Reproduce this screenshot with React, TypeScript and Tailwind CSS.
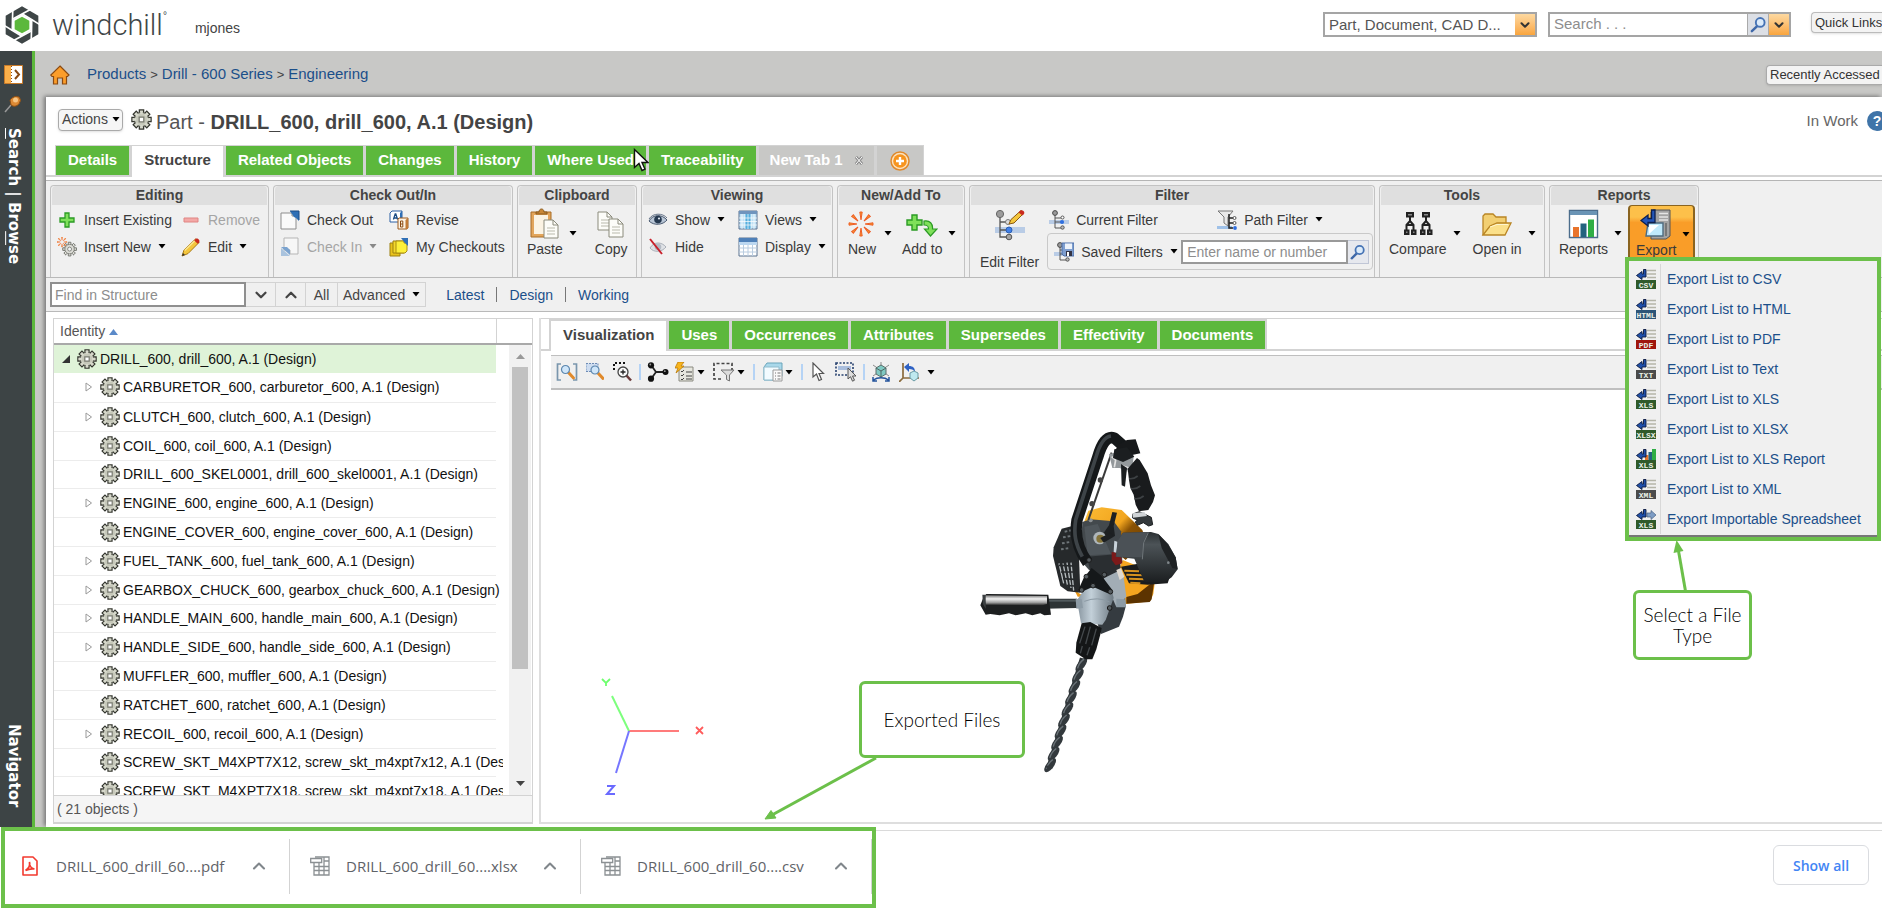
import { useState } from 'react';
import type { ReactNode } from 'react';
import { ChevronDown, ChevronUp } from 'lucide-react';

type IconProps = { className?: string };

/* ---------- small shared glyphs ---------- */

function Caret({ className = 'text-black' }: IconProps) {
  return (
    <svg className={`h-[5px] w-2 shrink-0 ${className}`} viewBox="0 0 8 5">
      <path d="M0.5 0h7L4 4.6z" fill="currentColor" />
    </svg>
  );
}

function Gear({ className = 'h-5 w-5' }: IconProps) {
  const teeth = [0, 45, 90, 135, 180, 225, 270, 315];
  return (
    <svg className={`shrink-0 ${className}`} viewBox="0 0 20 20">
      {teeth.map((a) => (
        <path key={a} d="M8 4.2V0.900h4v3.300" fill="#d9dbcf" stroke="#34362f" strokeWidth="1.300" transform={`rotate(${a} 10 10)`} />
      ))}
      <circle cx="10" cy="10" r="6.800" fill="#c6c8ba" stroke="#4a4c43" strokeWidth="0.900" />
      {teeth.map((a) => (
        <path key={a} d="M8.700 5V1.600h2.600V5z" fill="#d6d8cb" transform={`rotate(${a} 10 10)`} />
      ))}
      <path d="M7.800 7.800h4.400v4.400H7.800z" fill="#fff" stroke="#77796f" strokeWidth="1.200" />
    </svg>
  );
}

function Magnifier({ className = 'h-5 w-5' }: IconProps) {
  return (
    <svg className={className} viewBox="0 0 20 20">
      <path d="M8.600 11.600L3 17" stroke="#3f68a8" strokeWidth="2.600" strokeLinecap="round" />
      <circle cx="11.800" cy="7.800" r="4.600" fill="#dcebfa" stroke="#4673b5" strokeWidth="2" />
    </svg>
  );
}

function Logo() {
  return (
    <svg className="h-[38px] w-[34px] shrink-0" viewBox="17 17 102 114">
      <path d="M68 18l49 28v56l-49 28-49-28V46z" fill="#3e4647" />
      {[0, 60, 120, 180, 240, 300].map((a) => (
        <path key={a} d="M39 57L68 41l28-15" fill="none" stroke="#fff" strokeWidth="5" transform={`rotate(${a} 68 74)`} />
      ))}
      <path d="M68 42l28 16v32l-28 16-28-16V58z" fill="#fff" />
      <path d="M68 49l22 12v26l-22 12-22-12V61z" fill="#5cb83c" />
    </svg>
  );
}

/* ---------- ribbon icons ---------- */

const PlusIcon = () => (
  <svg className="h-5 w-5" viewBox="0 0 20 20">
    <path d="M8 3h4v5h5v4h-5v5H8v-5H3V8h5z" fill="#7fe05a" stroke="#2b9a24" strokeWidth="1.300" />
  </svg>
);

const MinusIcon = () => (
  <svg className="h-5 w-5" viewBox="0 0 20 20">
    <path d="M3 8h14v4H3z" fill="#f3a8a6" stroke="#e08583" />
  </svg>
);

function Burst({ x, y, r }: { x: number; y: number; r: number }) {
  return (
    <g transform={`translate(${x} ${y})`}>
      {[0, 45, 90, 135, 180, 225, 270, 315].map((a) => (
        <path key={a} d={`M0 ${-r * 0.35}L${r * 0.1} ${-r}h${-r * 0.2}z`} fill="#f59a2c" stroke="#ee5a24" strokeWidth={r * 0.08} transform={`rotate(${a})`} />
      ))}
    </g>
  );
}

const InsertNewIcon = () => (
  <svg className="h-5 w-5" viewBox="0 0 20 20">
    <g transform="translate(5 4.5) scale(0.76)">
      {[0, 45, 90, 135, 180, 225, 270, 315].map((a) => (
        <path key={a} d="M8.300 4.200V1h3.400v3.200" fill="#e2e2dc" stroke="#6d6f68" strokeWidth="1.200" transform={`rotate(${a} 10 10)`} />
      ))}
      <circle cx="10" cy="10" r="6.200" fill="#dcdcd6" stroke="#6d6f68" />
      <circle cx="10" cy="10" r="2.600" fill="#f4f4f4" stroke="#6d6f68" />
    </g>
    <Burst x={5} y={5} r={5} />
  </svg>
);

const PencilIcon = () => (
  <svg className="h-5 w-5" viewBox="0 0 20 20">
    <path d="M1 19l2-6L14.500 2l3.600 3.400L7 16.600z" fill="#f4c63d" stroke="#a97812" />
    <path d="M3.600 13.600L14.600 3" stroke="#fbe896" strokeWidth="1.400" />
    <path d="M14.500 2C16 .4 19.600 3 18.100 5.400l-1.400 1.400-3.500-3.400z" fill="#c92a1e" />
    <path d="M1 19l1-3 2 2z" fill="#333" />
  </svg>
);

const CheckOutIcon = () => (
  <svg className="h-5 w-5" viewBox="0 0 20 20">
    <path d="M1 3h11v3h4v13H1z" fill="#fafafa" stroke="#8d8d8d" />
    <path d="M10 1h9v10l-3-3-2-1-2-3z" fill="#2f6fb5" />
    <path d="M10 1h9v9" fill="none" stroke="#1d4d85" />
  </svg>
);

const CheckInIcon = () => (
  <svg className="h-5 w-5" viewBox="0 0 20 20">
    <path d="M4 1h14v16h-8v-4H4z" fill="#f7f7f7" stroke="#b5b5b5" />
    <path d="M1 10l9 8v-5l-3-3z" fill="#7ba3cf" />
    <path d="M1 11v8h9z" fill="#a9c3de" />
  </svg>
);

const ReviseIcon = () => (
  <svg className="h-5 w-5" viewBox="0 0 20 20">
    <path d="M3 1h10v11H1V3z" fill="#fff" stroke="#2b5fa3" />
    <path d="M11 3l2-2v11h-2z" fill="#2f6fb5" />
    <path d="M4.400 9.500L6.200 4h.6l1.800 5.500M5 8h3" stroke="#1d4d85" strokeWidth="1.300" fill="none" />
    <path d="M10 8h9v10l-1 1H9V9z" fill="#fdf3e4" stroke="#9c5a1e" />
    <path d="M16.500 10l2.500-2v11h-2.500z" fill="#c27a35" />
    <path d="M11.500 11v6h2.300v-6zM11.500 14h2.300" stroke="#8a4a12" fill="none" />
  </svg>
);

const MyCheckoutsIcon = () => (
  <svg className="h-5 w-5" viewBox="0 0 20 20">
    <path d="M1 6h10v13H1z" fill="#e8c21c" stroke="#9d8010" />
    <path d="M4 4h11v12H4z" fill="#f4d92c" stroke="#9d8010" />
    <path d="M7 4h8v2h3v8l-2 2H7z" fill="#fdf03a" stroke="#a98c10" />
    <path d="M12 1h7v8l-3-3z" fill="#2f6fb5" />
  </svg>
);

const Doc = ({ x, y }: { x: number; y: number }) => (
  <g transform={`translate(${x} ${y})`}>
    <path d="M0 0h9l5 5v13H0z" fill="#fcfcf8" stroke="#8b8b7c" />
    <path d="M9 0v5h5" fill="none" stroke="#8b8b7c" />
    <path d="M3 8h8M3 11h8M3 14h8" stroke="#b9b9ac" />
  </g>
);

const PasteIcon = () => (
  <svg className="h-8 w-8" viewBox="0 0 32 32">
    <path d="M2 4h20v25H2z" fill="#e2a55b" stroke="#a86d27" />
    <path d="M5 7h14v19H5z" fill="#fbf3e3" />
    <path d="M7 6V4h3c0-4 5-4 5 0h3v2z" fill="#c98736" stroke="#8a5a1c" />
    <Doc x={15} y={12} />
  </svg>
);

const CopyIcon = () => (
  <svg className="h-8 w-8" viewBox="0 0 32 32">
    <Doc x={3} y={4} />
    <Doc x={14} y={11} />
  </svg>
);

const EyeIcon = () => (
  <svg className="h-5 w-5" viewBox="0 0 20 20">
    <path d="M1 11C5 4 14 4 19 10c-4 5-13 6-18 1z" fill="#b9c6d6" stroke="#4a5a70" />
    <circle cx="10" cy="9.600" r="3.800" fill="#25384f" />
    <circle cx="11" cy="8.500" r="1.100" fill="#dfe8f2" />
    <path d="M1 9C5 2.500 15 3 19 8" fill="none" stroke="#66758a" />
  </svg>
);

const HideIcon = () => (
  <svg className="h-5 w-5" viewBox="0 0 20 20">
    <path d="M2 11C6 4 14 5 18 10c-4 5-12 6-16 1z" fill="#dfe2e6" stroke="#a9afb8" />
    <circle cx="10" cy="10" r="3.300" fill="#b3bac4" />
    <path d="M2 2l12 15" stroke="#c8202b" strokeWidth="2" />
  </svg>
);

const ViewsIcon = () => (
  <svg className="h-5 w-5" viewBox="0 0 20 20">
    <path d="M1 1h18v18H1z" fill="#bfe0f5" stroke="#5a7390" />
    <path d="M7 2h6v17H7z" fill="#54aede" />
    <path d="M1 1h18v3H1z" fill="#6f94bd" />
    <path d="M4 4v15M7 4v15M10 4v15M13 4v15M16 4v15M1 8h18M1 11.500h18M1 15h18" stroke="#fff" strokeWidth="0.700" />
  </svg>
);

const DisplayIcon = () => (
  <svg className="h-5 w-5" viewBox="0 0 20 20">
    <path d="M1 1h18v18H1z" fill="#fff" stroke="#5a7390" />
    <path d="M1 1h18v4H1z" fill="#4f80b8" />
    <path d="M1 5h18v3H1z" fill="#bcd7f0" />
    <path d="M5.500 8v11M10 8v11M14.500 8v11M1 11h18M1 15h18" stroke="#b9cce0" />
  </svg>
);

const NewIcon = () => (
  <svg className="h-8 w-8" viewBox="0 0 32 32">
    <Burst x={15} y={16} r={12} />
  </svg>
);

const AddToIcon = () => (
  <svg className="h-8 w-8" viewBox="0 0 32 32">
    <path d="M6 7h5v5h5v5h-5v5H6v-5H1v-5h5z" fill="#7fe05a" stroke="#2b9a24" strokeWidth="1.400" />
    <path d="M18 13c6-1 9 3 8.500 8H31l-6.500 7-6-7h4c0-3-1-4-4.500-4z" fill="#7fe05a" stroke="#2b9a24" strokeWidth="1.200" />
  </svg>
);

function TreeNodes() {
  return (
    <g>
      <path d="M0 10h20v4H0z" fill="#b9cce6" />
      <path d="M6 4v14h6M6 8h6M6 12h6" fill="none" stroke="#555" />
      <circle cx="6" cy="3" r="2.400" fill="#9a9a9a" stroke="#4a4a4a" />
      <circle cx="13.500" cy="7.500" r="1.500" fill="#fff" stroke="#555" />
      <circle cx="13" cy="12" r="2.100" fill="#2f6fe0" />
      <circle cx="13.500" cy="17.500" r="1.700" fill="#bbb" stroke="#555" />
    </g>
  );
}

const EditFilterIcon = () => (
  <svg className="h-8 w-8" viewBox="0 0 32 32">
    <path d="M1 18h30v6H1z" fill="#b9cce6" />
    <path d="M6 6v22h7M6 13h7M6 21h7" fill="none" stroke="#555" strokeWidth="1.300" />
    <circle cx="6" cy="5" r="3.600" fill="#9c9c9c" stroke="#666" />
    <circle cx="15" cy="21" r="3" fill="#3f7fe8" stroke="#2b5fb5" />
    <circle cx="15" cy="28" r="2.800" fill="#a5a5a5" stroke="#555" />
    <circle cx="14" cy="13" r="2.500" fill="#ddd" stroke="#777" />
    <path d="M15 15l2-4.500L27 1.500l3 2.500-10 10z" fill="#f4c63d" stroke="#8a5a12" />
    <path d="M25.500 2.500c2-3 6 0 4.500 2.500l-1.500 1.500-4-3z" fill="#c92a1e" />
  </svg>
);

const CurrentFilterIcon = () => (
  <svg className="h-5 w-5" viewBox="0 0 20 20">
    <TreeNodes />
  </svg>
);

const PathFilterIcon = () => (
  <svg className="h-5 w-5" viewBox="0 0 20 20">
    <path d="M0 16h15v3H0z" fill="#9fc1e8" />
    <path d="M1 1h15l-5 6v9l-4-3V7z" fill="#e8e8e8" stroke="#777" />
    <path d="M12 4v14h4M12 8h4M12 13h4" fill="none" stroke="#222" strokeWidth="1.500" />
    <circle cx="17.500" cy="8" r="1.500" fill="#fff" stroke="#555" />
    <circle cx="17.500" cy="13" r="1.500" fill="#fff" stroke="#555" />
    <circle cx="18" cy="18" r="1.900" fill="#2f6fe0" />
  </svg>
);

const SavedFilterIcon = () => (
  <svg className="h-5 w-5" viewBox="0 0 20 20">
    <TreeNodes />
    <path d="M8 1h12v13H10l-2-2z" fill="#7f9fd0" stroke="#4d6ea8" />
    <path d="M11 1.500h7V7h-7z" fill="#eef3fa" />
    <path d="M12 9h6v5h-6z" fill="#334" />
    <path d="M13 10h2v4h-2z" fill="#fff" />
  </svg>
);

const CompareIcon = () => (
  <svg className="h-8 w-8" viewBox="0 0 32 32">
    {[2, 18].map((x) => (
      <g key={x} transform={`translate(${x} 4)`} fill="none" stroke="#222" strokeWidth="2">
        <path d="M6 4v5M6 9L2.500 13v5M6 9l3.500 4v5M2.500 13h7" />
        <path d="M3 1h6v3.500H3zM1 18.500h3.500v3.500H1zM8 18.500h3.500v3.500H8z" fill="#888" />
      </g>
    ))}
  </svg>
);

const FolderIcon = () => (
  <svg className="h-8 w-8" viewBox="0 0 32 32">
    <path d="M2 27V8l2-2h8l3 3h10v6" fill="#f2cf72" stroke="#b98524" strokeWidth="1.300" />
    <path d="M2 27l7-9 7-3h14l-6 12z" fill="#fbe08a" stroke="#b98524" strokeWidth="1.300" />
    <path d="M9 19l7-2.500h11" stroke="#fff6cf" fill="none" />
  </svg>
);

const ReportsIcon = () => (
  <svg className="h-8 w-8" viewBox="0 0 32 32">
    <path d="M1.500 2.500h28v27h-28z" fill="#fff" stroke="#4c6d8c" strokeWidth="1.400" />
    <path d="M2 3h27v4H2z" fill="#6a94b5" />
    <path d="M5 19h6v10H5z" fill="#e8742c" />
    <path d="M12.500 15.500h6V29h-6z" fill="#23637f" />
    <path d="M20 11.500h6V29h-6z" fill="#2fae45" />
  </svg>
);

const ExportIcon = () => (
  <svg className="h-8 w-8" viewBox="0 0 32 32">
    <path d="M13 1h17v26l-4 3H11V3z" fill="#a3a3a3" stroke="#555" />
    <path d="M19 4.500h9M19 8h9M19 11h9" stroke="#e5e5e5" strokeWidth="1.400" />
    <path d="M26 14v13" stroke="#777" strokeWidth="2" />
    <path d="M8 14h15v13H6z" fill="#bfe9fb" stroke="#4d6b80" strokeWidth="1.400" />
    <path d="M9 16h10l-10 9z" fill="#fff" />
    <path d="M15 1v12.500H8V17L1 11.500 8 6v3.500h3.500V1z" fill="#2456b8" stroke="#0d1f4d" strokeWidth="1.300" />
  </svg>
);

const HomeIcon = () => (
  <svg className="h-5 w-5 shrink-0" viewBox="0 0 20 20">
    <path d="M10 1l9 9-1.500 1.500H16.500V19h-4v-6h-5v6h-4v-7.500H2L.800 10z" fill="#fb9d2a" stroke="#8a4a12" strokeWidth="1.200" />
  </svg>
);

/* ---------- ribbon building blocks ---------- */

function Group({ title, className, children }: { title: string; className: string; children: ReactNode }) {
  return (
    <section className={`flex h-[92px] shrink-0 flex-col rounded-t border border-b-0 border-[#c3c3c3] ${className}`}>
      <h3 className="mx-px h-[19px] shrink-0 rounded-t bg-[#dfdfdf] text-center text-sm leading-[18px] font-bold text-[#444]">{title}</h3>
      {children}
    </section>
  );
}

type ItemProps = { icon: ReactNode; label: string; caret?: boolean; disabled?: boolean };

function Item({ icon, label, caret, disabled }: ItemProps) {
  return (
    <button disabled={disabled} className={`flex h-[27px] items-center gap-[7px] text-sm whitespace-nowrap ${disabled ? 'text-[#a5a5a5]' : 'text-[#3a3a3a]'}`}>
      {icon}
      {label}
      {caret && <Caret className={disabled ? 'text-[#888]' : 'text-black'} />}
    </button>
  );
}

function BigItem({ icon, label, caret }: ItemProps) {
  return (
    <button className="flex items-start gap-[6px] pt-[3px] text-sm text-[#3a3a3a]">
      <span className="flex flex-col items-center leading-[18px] whitespace-nowrap">
        {icon}
        {label}
      </span>
      {caret && (
        <span className="pt-[23px]">
          <Caret />
        </span>
      )}
    </button>
  );
}

/* ---------- tabs ---------- */

function Tab({ label, active, onClick }: { label: string; active: boolean; onClick: () => void }) {
  return (
    <button
      role="tab"
      aria-selected={active}
      onClick={onClick}
      className={`px-3 text-[15px] font-bold whitespace-nowrap ${active ? '-mb-[2px] bg-white pb-[2px] text-[#444]' : 'bg-[#5cb83c] text-white'}`}
    >
      {label}
    </button>
  );
}

/* ---------- export menu ---------- */

const exportOptions = [
  { label: 'Export List to CSV', tag: 'CSV', color: '#2f5a2a' },
  { label: 'Export List to HTML', tag: 'HTML', color: '#2d5578' },
  { label: 'Export List to PDF', tag: 'PDF', color: '#a0160c' },
  { label: 'Export List to Text', tag: 'TXT', color: '#4a4a4a' },
  { label: 'Export List to XLS', tag: 'XLS', color: '#2f5a2a' },
  { label: 'Export List to XLSX', tag: 'XLSX', color: '#2f5a2a' },
  { label: 'Export List to XLS Report', tag: 'XLS', color: '#2f5a2a', extra: 'chart' },
  { label: 'Export List to XML', tag: 'XML', color: '#4a4a4a' },
  { label: 'Export Importable Spreadsheet', tag: 'XLS', color: '#2f5a2a', extra: 'import' },
];

function ExportFileIcon({ tag, color, extra }: { tag: string; color: string; extra?: string }) {
  return (
    <svg className="h-5 w-5 shrink-0" viewBox="0 0 20 20">
      {!extra && <path d="M11 1.500h9M11 5h9M11 8.500h9" stroke="#b5b5a8" strokeWidth="1.400" />}
      {extra === 'chart' && (
        <>
          <path d="M9 6h3.500v5H9z" fill="#e8742c" />
          <path d="M12.500 3H16v8h-3.500z" fill="#23637f" />
          <path d="M16 0h4v11h-4z" fill="#2fae45" />
        </>
      )}
      {extra === 'import' && <path d="M11 4h4V1.500L20 6l-5 4.500V8h-4z" fill="#7d9cc4" stroke="#4b6384" strokeWidth="0.700" />}
      <path d="M10 .500V8H6v2.500L.500 6.500 6 2.500V5h1.500V.500z" fill="#1f4fa8" stroke="#0c1a40" strokeWidth="0.900" />
      <path d="M0 11h20v9H0z" fill={color} />
      <text x="10" y="18.500" textAnchor="middle" fontSize="8" fontWeight="bold" fill="#e9f0e6" fontFamily="Liberation Mono, monospace">
        {tag}
      </text>
    </svg>
  );
}

function Callout({ className, children }: { className: string; children: ReactNode }) {
  return (
    <div className={`absolute flex items-center justify-center rounded-md border-[3px] border-[#6cc04a] bg-white text-center font-[Lato,sans-serif] text-[19px] leading-[21px] font-light text-black ${className}`}>
      {children}
    </div>
  );
}

function ExportMenu() {
  return (
    <div className="absolute top-[51px] -left-[5px] z-20">
      <ul className="w-64 border-4 border-[#6cc04a] bg-[#f0f0f0] pt-[3px] pb-[3px] shadow-[inset_0_-2px_0_#777]">
        {exportOptions.map((o) => (
          <li key={o.label} className="h-[30px] px-[7px]">
            <a href="#" className="flex h-full items-center text-sm whitespace-nowrap text-[#1b4f8a]">
              <ExportFileIcon tag={o.tag} color={o.color} extra={o.extra} />
              <span className="ml-1 flex h-full items-center border-l border-[#d8d8d8] pl-[6px]">{o.label}</span>
            </a>
          </li>
        ))}
      </ul>
      <svg className="absolute top-[283px] left-10 h-[54px] w-8" viewBox="0 0 32 54">
        <path d="M21 54L13 8" stroke="#6cc04a" strokeWidth="3" />
        <path d="M11.500 0l7 11-10 2z" fill="#6cc04a" />
      </svg>
      <Callout className="top-[333px] left-2 h-[70px] w-[119px]">
        Select a File
        <br />
        Type
      </Callout>
    </div>
  );
}

/* ---------- structure tree ---------- */

const parts = [
  { name: 'CARBURETOR_600', open: true },
  { name: 'CLUTCH_600', open: true },
  { name: 'COIL_600' },
  { name: 'DRILL_600_SKEL0001' },
  { name: 'ENGINE_600', open: true },
  { name: 'ENGINE_COVER_600' },
  { name: 'FUEL_TANK_600', open: true },
  { name: 'GEARBOX_CHUCK_600', open: true },
  { name: 'HANDLE_MAIN_600', open: true },
  { name: 'HANDLE_SIDE_600', open: true },
  { name: 'MUFFLER_600' },
  { name: 'RATCHET_600' },
  { name: 'RECOIL_600', open: true },
  { name: 'SCREW_SKT_M4XPT7X12' },
  { name: 'SCREW_SKT_M4XPT7X18' },
];

function StructureTree() {
  return (
    <div className="flex w-[480px] shrink-0 flex-col border border-b-2 border-[#d3d3d3] bg-white">
      <div className="flex min-h-0 flex-1">
        <div className="min-w-0 flex-1 overflow-hidden">
          <table className="w-full table-fixed border-collapse text-sm text-[#111]">
            <thead>
              <tr className="h-[25px] border-b-2 border-[#a9a9a9]">
                <th className="border-r border-[#d3d3d3] pl-[6px] text-left font-normal text-[#555]">
                  Identity
                  <svg className="ml-1 inline h-[6px] w-[9px]" viewBox="0 0 9 6">
                    <path d="M4.500 0L9 6H0z" fill="#5b8ac9" />
                  </svg>
                </th>
                <th className="w-[12px]" />
              </tr>
            </thead>
            <tbody>
              <tr className="h-[29px] bg-[#dff3d8]">
                <td className="pl-2">
                  <div className="flex items-center gap-[3px] whitespace-nowrap">
                    <svg className="mr-1 h-2 w-2 shrink-0" viewBox="0 0 8 8">
                      <path d="M8 0v8H0z" fill="#333" />
                    </svg>
                    <Gear />
                    DRILL_600, drill_600, A.1 (Design)
                  </div>
                </td>
                <td className="bg-white" />
              </tr>
              {parts.map((p) => (
                <tr key={p.name} className="h-[29px] nth-[5n]:h-[28px]">
                  <td className="border-b border-[#ececec] pl-[31px]">
                    <div className="-mr-[7px] flex items-center gap-[3px] overflow-hidden whitespace-nowrap">
                      <svg className="mr-1 h-[10px] w-2 shrink-0" viewBox="0 0 8 10">
                        {p.open && <path d="M1 1l5.500 4L1 9z" fill="#fff" stroke="#999" />}
                      </svg>
                      <Gear />
                      {p.name}, {p.name.toLowerCase()}, A.1 (Design)
                    </div>
                  </td>
                  <td />
                </tr>
              ))}
            </tbody>
          </table>
        </div>
        <div className="flex w-[24px] shrink-0 flex-col">
          <div className="h-[26px] border-b-2 border-[#a9a9a9]" />
          <div className="mx-px flex flex-1 flex-col items-center bg-[#f1f1f1] py-[9px]">
            <svg className="mb-2 h-[5px] w-[9px]" viewBox="0 0 9 5">
              <path d="M4.500 0L9 5H0z" fill="#999" />
            </svg>
            <div className="h-[302px] w-4 bg-[#c1c1c1]" />
            <svg className="mt-auto h-[5px] w-[9px]" viewBox="0 0 9 5">
              <path d="M0 0h9L4.500 5z" fill="#444" />
            </svg>
          </div>
        </div>
      </div>
      <p className="h-[27px] border-t border-[#d3d3d3] bg-[#f5f5f5] pl-[3px] text-sm leading-[26px] text-[#555]">( 21 objects )</p>
    </div>
  );
}

/* ---------- viewer ---------- */

const viewerTabs = ['Visualization', 'Uses', 'Occurrences', 'Attributes', 'Supersedes', 'Effectivity', 'Documents'];

const Sep = () => <span className="h-4 w-[2px] bg-[#b5d3f5]" />;

function Lens({ x, y }: { x: number; y: number }) {
  return (
    <g transform={`translate(${x} ${y})`}>
      <path d="M7 7l5.500 6" stroke="#e08a2c" strokeWidth="3" strokeLinecap="round" />
      <circle cx="4.500" cy="4.500" r="4" fill="#cfe6fa" stroke="#5d87ae" strokeWidth="1.200" />
    </g>
  );
}

function ViewerToolbar() {
  return (
    <div className="ml-[10px] flex h-[35px] items-center border-t border-b-2 border-[#bfbfbf] bg-[#f0f0f0] pl-[5px]">
      <button aria-label="Zoom all">
        <svg className="h-5 w-[22px]" viewBox="0 0 22 20">
          <path d="M5 2H1.500v16H5M17 2h3.500v16H17" fill="none" stroke="#7a96ad" strokeWidth="1.700" />
          <Lens x={5} y={3} />
        </svg>
      </button>
      <button aria-label="Zoom selected" className="ml-2">
        <svg className="h-5 w-[18px]" viewBox="0 0 18 20">
          <path d="M0 1.500h12v8H0z" fill="#cddcf0" stroke="#6d8bb5" strokeDasharray="2 1" />
          <Lens x={4.5} y={3.5} />
        </svg>
      </button>
      <button aria-label="Zoom window" className="ml-[9px]">
        <svg className="h-5 w-5" viewBox="0 0 20 20">
          <path d="M1 8V1h11" fill="none" stroke="#111" strokeWidth="2" strokeDasharray="2 2" />
          <path d="M13 13l5 5.500" stroke="#6b3a3a" strokeWidth="2.500" />
          <circle cx="10" cy="10" r="5" fill="#fafafa" stroke="#444" strokeWidth="1.300" />
          <path d="M7.500 10h5M10 7.500v5" stroke="#222" strokeWidth="1.300" />
        </svg>
      </button>
      <span className="mx-[6px] flex"><Sep /></span>
      <button aria-label="Explode">
        <svg className="h-5 w-[22px]" viewBox="0 0 22 20">
          <path d="M4 3l5 7-5 7M9 10h10" fill="none" stroke="#222" strokeWidth="1.800" />
          <circle cx="4" cy="3.300" r="3.100" fill="#111" />
          <circle cx="4" cy="16.700" r="3.100" fill="#111" />
          <circle cx="18.500" cy="10" r="3" fill="#111" />
          <circle cx="3.300" cy="2.500" r="0.900" fill="#999" />
          <circle cx="17.800" cy="9.200" r="0.900" fill="#999" />
        </svg>
      </button>
      <button aria-label="Display options" className="ml-[6px] flex items-center gap-[2px]">
        <svg className="h-5 w-[20px]" viewBox="0 0 20 20">
          <path d="M4 5h14v14H4z" fill="#e6e6de" stroke="#8a8a80" />
          <path d="M6 9l1 1 2-2M6 13l1 1 2-2M6 17l1 1 2-2M11 10h6M11 14h6M11 17h6" fill="none" stroke="#444" />
          <path d="M3 0h6L6 4h3L1 11l2-5H0z" fill="#f9b51c" stroke="#b97a08" strokeWidth="0.800" />
        </svg>
        <Caret />
      </button>
      <button aria-label="Selection filter" className="ml-2 flex items-center gap-[2px]">
        <svg className="h-5 w-[22px]" viewBox="0 0 22 20">
          <path d="M8 17H1V1.500h18V8" fill="none" stroke="#444" strokeWidth="1.700" strokeDasharray="3 2" />
          <path d="M8 8h13l-4.500 5v6l-3-1.500V13z" fill="#ddd" stroke="#777" />
        </svg>
        <Caret />
      </button>
      <span className="mx-2 flex"><Sep /></span>
      <button aria-label="View style" className="flex items-center gap-[2px]">
        <svg className="h-5 w-5" viewBox="0 0 20 20">
          <path d="M1 5l3-4h15v13l-3 4H1z" fill="#a9d8ea" stroke="#6aa5bb" />
          <path d="M1 5h15v13H1z" fill="#f2fbff" stroke="#8fbccd" />
          <path d="M10 8h9v11h-9z" fill="#fafafa" stroke="#999" />
          <path d="M12 11h1M12 14h1M12 17h1M14.500 11h3M14.500 14h3M14.500 17h3" stroke="#777" />
        </svg>
        <Caret />
      </button>
      <span className="mx-2 flex"><Sep /></span>
      <button aria-label="Select">
        <svg className="h-5 w-[14px]" viewBox="0 0 14 20">
          <path d="M2 1v14l3.500-3 2.500 6.500 2.500-1L8 11.500h4.500z" fill="#fff" stroke="#555" strokeWidth="1.200" />
        </svg>
      </button>
      <button aria-label="Box select" className="ml-[10px]">
        <svg className="h-5 w-[22px]" viewBox="0 0 22 20">
          <path d="M1 1h17v12H1z" fill="none" stroke="#26406e" strokeWidth="1.600" strokeDasharray="2 1.500" />
          <path d="M3 4h13v4H3z" fill="#a9bedd" />
          <path d="M13 6v11l2.500-2.300 2 4.500 2-1-2-4.200h3.500z" fill="#ddd" stroke="#555" />
        </svg>
      </button>
      <span className="mx-[6px] flex"><Sep /></span>
      <button aria-label="Spin">
        <svg className="h-5 w-5" viewBox="0 0 20 20">
          <path d="M10 0v16M2 3l16 11M18 3L2 14" stroke="#8b8b8b" />
          <path d="M5 6l5-3 5 3v6l-5 3-5-3z" fill="#7fc9c2" stroke="#5c6f6c" />
          <path d="M5 6l5 3 5-3M10 9v6" stroke="#4f6663" fill="none" />
          <path d="M2 15v4h4M18 15v4h-4M2.500 18c4-3 11-3 15 0" fill="none" stroke="#23539c" strokeWidth="1.500" />
        </svg>
      </button>
      <button aria-label="Orientation" className="ml-2 flex items-center gap-2">
        <svg className="h-5 w-5" viewBox="0 0 20 20">
          <path d="M4 1v15L0 20M4 16h16" stroke="#8a6a3c" strokeWidth="1.700" fill="none" />
          <path d="M5 5l5-4v3c4 0 6 2 6 6-1-2-3-3-6-3v3z" fill="#2f62c4" />
          <path d="M11 11l4-2 4 2v5l-4 3-4-3z" fill="#bfe9ef" stroke="#6a9aa3" />
        </svg>
        <Caret />
      </button>
    </div>
  );
}

function DrillModel() {
  const bolts = [[422, 540], [456, 527], [508, 545], [436, 500], [490, 494], [506, 594], [444, 450]];
  const flutes = [0, 1, 2, 3, 4, 5, 6, 7, 8, 9];
  return (
    <svg className="absolute top-[20px] left-[400px] h-[380px] w-[280px]" viewBox="0 0 840 1140">
      <defs>
        <linearGradient id="grip" x1="0" y1="0" x2="0" y2="1">
          <stop offset="0" stopColor="#777" />
          <stop offset="0.350" stopColor="#f2f2f2" />
          <stop offset="0.700" stopColor="#a5a5a5" />
          <stop offset="1" stopColor="#2a2a2a" />
        </linearGradient>
        <linearGradient id="cone" x1="0" y1="0" x2="1" y2="0">
          <stop offset="0" stopColor="#84929c" />
          <stop offset="0.400" stopColor="#c3d0d9" />
          <stop offset="1" stopColor="#6d7982" />
        </linearGradient>
        <linearGradient id="cap" x1="0" y1="0" x2="0" y2="1">
          <stop offset="0" stopColor="#2c3134" />
          <stop offset="0.250" stopColor="#4c5357" />
          <stop offset="1" stopColor="#1c1f21" />
        </linearGradient>
        <linearGradient id="tank" x1="0" y1="0" x2="1" y2="0.800">
          <stop offset="0" stopColor="#fbbb35" />
          <stop offset="0.500" stopColor="#f2a51e" />
          <stop offset="0.650" stopColor="#8a5204" />
          <stop offset="1" stopColor="#6d3e00" />
        </linearGradient>
      </defs>

      {/* fuel tank */}
      <path d="M428 340l14-38 40-10 60 8 62 60 10 30-60 60-110-90z" fill="url(#tank)" />
      <path d="M545 450l100 40-8 62-10 22-72 8-20-60-8-30z" fill="#f5a51f" />
      <path d="M590 552l50-40-8 56-6 8-70 5v-20z" fill="#5c3300" />
      <path d="M400 540l30 20-20 0z" fill="#e8971a" />
      <path d="M575 312l20-7 36 17 4 22-12 4-16-10-18 8-6-10 6-6-14-6z" fill="#34393c" stroke="#1c1f21" strokeWidth="3" />
      <path d="M574 310l36-4 8 12-42 5z" fill="#cfd3d6" />

      {/* muffler guard on the left */}
      <path d="M362 356l32-8 18 40 6 160-38-4-22-16-22-90 2-26z" fill="#26292b" />
      <path d="M371 365l20-4M366 382l24-4M363 400l24-4M360 418l26-4" stroke="#6d7478" strokeWidth="6" strokeDasharray="8 6" />
      <path d="M354 460l14 60M366 460l14 68M378 458l12 76M390 458l8 84" stroke="#b5bbbe" strokeWidth="4" />
      <path d="M354 466l44 2M360 486l40 0M366 506l34 2M376 526l24 2" stroke="#26292b" strokeWidth="5" />

      {/* engine housing */}
      <path d="M424 336l24-8 70 6 22 30 4 90-30 46-70-20-26-30z" fill="#43494d" />
      <path d="M430 350l40-8 40 90-70 4z" fill="#4f565b" />
      <path d="M438 440l96-8 8 70-30 20-60-20z" fill="#2a2e31" />
      <path d="M514 306l14 2-10 40 4 30-34 14-8-12 24-34z" fill="#1d2022" />
      <circle cx="476" cy="384" r="19" fill="#aeb6ba" />
      <circle cx="478" cy="386" r="12" fill="#84733a" />
      <path d="M478 384l30-16 10 12-30 18z" fill="#1d2022" />
      <circle cx="449" cy="331" r="6" fill="#8c9194" />
      <path d="M512 426l26 4 6 30-20 6-12-16z" fill="#7b1a1a" />
      <path d="M520 392l18 6 2 34-22-6z" fill="#c9d3da" />

      {/* air filter */}
      <path d="M540 470l60-10 90 30-10 30-60 4-56-4z" fill="#1a1c1e" />
      <path d="M550 482l44 2M556 494l50 2M564 506l46 2M568 518l30 2" stroke="#d7921f" strokeWidth="6" />
      <path d="M530 392l16-24 84-2 22 6 30 30 22 40 6 36-18 24-20 14-62 0-30-70-56-6z" fill="url(#cap)" />
      <path d="M530 392l16-24 76-2-16 30-4 46-76-2z" fill="#4b5156" />
      <path d="M622 368l-14 30-4 50" stroke="#70777b" strokeWidth="3" fill="none" />
      <path d="M652 372l30 32 22 38 6 36-16-4-32-60z" fill="#1f2224" />
      <circle cx="682" cy="458" r="4" fill="#80878b" />

      {/* loop handle and its cable */}
      <path d="M512 128L442 330" stroke="#3a3a3a" strokeWidth="6" />
      <path d="M440 458C412 420 400 380 408 330L470 142C482 100 498 76 520 84l34 30" fill="none" stroke="#15181a" strokeWidth="34" strokeLinejoin="round" />
      <path d="M424 440C402 400 398 370 404 330L466 138C476 104 492 80 510 78" fill="none" stroke="#3e4448" strokeWidth="11" />
      <circle cx="478" cy="210" r="8" fill="#444" />
      <circle cx="453" cy="281" r="8" fill="#444" />
      <path d="M532 104l26-14 26-2 14 42-56 12-14 22-16-22z" fill="#17191b" />
      <path d="M504 132l20-4 24 18 30-6-4 32-18 10-20-8-22 0z" fill="#94999c" />
      <path d="M512 140l12 10-4 22M546 168l24 8-16 10z" stroke="#e3e3e3" strokeWidth="5" fill="none" />
      <path d="M520 118l38-6 22 28-34 16-30-12z" fill="#1b1e20" />
      <path d="M540 162l2 64 10 4 6-56z" fill="#1b1e20" />
      <path d="M560 176l28-32 8 6 24 40 10 36 12 30-6 20-14 24-28 4-10-20-6-30-10-20-4-24z" fill="#191b1d" />
      <path d="M564 206q14 2 26-8M570 236q16 2 28-8M580 266q16 2 28-8" stroke="#3d4144" strokeWidth="5" fill="none" />

      {/* side handle */}
      <path d="M312 566l96 0v28l-96 2z" fill="#2e3436" />
      <path d="M312 572h96" stroke="#515a5d" strokeWidth="6" />
      <path d="M128 560l8-8 186 2 8 60-20 2-12-6-24 6-20-6-30 6-20-6-28 6-28-4-14 2-16-28z" fill="#1d1f20" />
      <path d="M130 556l188 2v24l-14 4-170-2z" fill="url(#grip)" />
      <path d="M124 554h10v42l-8-14z" fill="#3b3f41" />

      {/* bit */}
      <path d="M424 745L324 1072" stroke="#2c3235" strokeWidth="15" />
      {flutes.map((i) => (
        <g key={i} transform={`translate(${421 - i * 10.4} ${764 + i * 33.500}) rotate(38)`}>
          <ellipse rx="11" ry="25" fill="#33393d" />
          <path d="M-4 -18q-5 18 2 34" stroke="#6b7378" strokeWidth="4" fill="none" />
        </g>
      ))}
      <path d="M314 1068l22-4-2 12-16 1z" fill="#33393d" />

      {/* gearbox */}
      <path d="M510 520l40 10 4 60-8 30-12 30-54 22-20-60z" fill="#353b40" />
      <path d="M488 505l40-20 20 16 8 60-30 30z" fill="#a2adb5" />
      <path d="M526 480l14-6 10 26-14 10z" fill="#e0dad2" />
      <path d="M406 574l24-36 50-20 32 20 6 26-24 66-10 14-64-4-8-46z" fill="url(#cone)" />
      <path d="M404 566l18 2 4 26-20 2zM526 566l28 2v24l-28 0z" fill="#8d9ba5" />
      <path d="M430 574q40-16 76 2" stroke="#8b99a3" strokeWidth="3" fill="none" />
      <path d="M412 540l16-36 24-30 30 24 32 42-14 10-44-20-30 14z" fill="#15181a" />
      {bolts.map(([x, y]) => (
        <circle key={x} cx={x} cy={y} r="7" fill="#555c60" stroke="#1a1a1a" strokeWidth="3" />
      ))}

      {/* chuck */}
      <path d="M422 640l26-4 34 18-2 12-14 52-12 30-20 0-30-20 2-30z" fill="#141617" />
      <path d="M432 650l-16 50M448 650l-14 52M466 656l-14 50M424 708l-6 22M446 712l-8 24" stroke="#44494c" strokeWidth="4" />
    </svg>
  );
}

function AxisTriad() {
  return (
    <svg className="absolute bottom-[22px] left-[59px] h-[130px] w-[110px]" viewBox="600 670 110 130" fill="none">
      <path d="M629 731h50" stroke="#ff7b7b" strokeWidth="2" />
      <path d="M629 731l-17-35" stroke="#7dff7d" strokeWidth="2" />
      <path d="M629 731l-13 42" stroke="#7676ff" strokeWidth="2" />
      <path d="M696 727l7 7M703 727l-7 7" stroke="#ff5c5c" strokeWidth="1.800" />
      <path d="M602 679l4 4 4-4M606 683v3" stroke="#6dff6d" strokeWidth="1.800" />
      <path d="M607 786h7l-7 8h8" stroke="#6a6aff" strokeWidth="2" />
    </svg>
  );
}

function Viewer() {
  const [tab, setTab] = useState('Visualization');
  return (
    <div className="flex min-w-0 flex-1 flex-col border-b-2 border-l-2 border-[#dedede] bg-white">
      <div className="flex h-[33px] border-t border-b-2 border-[#d3d3d3] pl-[8px]">
        <div role="tablist" className="flex gap-[3px] border-x-2 border-t-2 border-[#d3d3d3] bg-[#d3d3d3]">
          {viewerTabs.map((t) => (
            <Tab key={t} label={t} active={t === tab} onClick={() => setTab(t)} />
          ))}
        </div>
      </div>
      <div className="h-[4px]" />
      <ViewerToolbar />
      <div className="relative min-h-0 flex-1">
        <DrillModel />
        <AxisTriad />
      </div>
    </div>
  );
}

/* ---------- downloads ---------- */

const PdfIcon = () => (
  <svg className="h-5 w-5" viewBox="0 0 20 20">
    <path d="M3 1h10l4 4v14H3z" fill="#fff" stroke="#f23a2f" strokeWidth="1.600" strokeLinejoin="round" />
    <path d="M5.500 14.500c3-2 5-5 4-8.500-.500 3.500 1.500 6.500 5 7-3-.500-6 0-9 1.500z" fill="none" stroke="#f23a2f" strokeWidth="1.700" />
  </svg>
);

const SheetIcon = () => (
  <svg className="h-5 w-5" viewBox="0 0 20 20" fill="none" stroke="#8b9093" strokeWidth="1.300">
    <path d="M4 6v13h15V1H5M4 10.500h15M4 14.500h15M9 7v12M14 1v18M14 5h5" />
    <path d="M.700 2.500h11v4H.700z" fill="#fff" />
  </svg>
);

const downloads = [
  { name: 'DRILL_600_drill_60....pdf', icon: <PdfIcon /> },
  { name: 'DRILL_600_drill_60....xlsx', icon: <SheetIcon /> },
  { name: 'DRILL_600_drill_60....csv', icon: <SheetIcon /> },
];

function DownloadsBar() {
  return (
    <footer className="flex h-[81px] shrink-0 bg-white">
      <div className="relative z-10 ml-px flex w-[875px] items-center border-4 border-[#6cc04a] pb-[3px]">
        {downloads.map((d) => (
          <div key={d.name} className="flex h-[55px] flex-1 items-center border-r border-[#d3d3d3] pr-5 pl-5 first:w-[285px] first:flex-none first:pl-[15px] last:border-r-0">
            {d.icon}
            <a href="#" className="ml-4 font-['Open_Sans',sans-serif] text-[15px] whitespace-nowrap text-[#5f6368]">
              {d.name}
            </a>
            <button aria-label="More" className="ml-auto">
              <ChevronUp className="h-5 w-5 text-[#80868b]" strokeWidth={2.5} />
            </button>
          </div>
        ))}
        <Callout className="-top-[150px] left-[854px] h-[77px] w-[166px]">Exported Files</Callout>
        <svg className="absolute -top-[75px] left-[755px] h-[65px] w-[125px]" viewBox="760 755 125 65">
          <path d="M876 757L772 814" stroke="#6cc04a" strokeWidth="3" />
          <path d="M765 818l6-8.500 5 7.500z" fill="#6cc04a" stroke="#6cc04a" />
        </svg>
      </div>
      <div className="mt-[3px] flex flex-1 items-start justify-end border-t border-[#dadada] pt-[14px] pr-[13px]">
        <button className="h-10 w-24 rounded-md border border-[#dadce0] font-['Open_Sans',sans-serif] text-[14px] font-semibold text-[#4285f4]">Show all</button>
      </div>
    </footer>
  );
}

/* ---------- page ---------- */

const mainTabs = ['Details', 'Structure', 'Related Objects', 'Changes', 'History', 'Where Used', 'Traceability'];

function Header() {
  return (
    <header className="flex h-[51px] shrink-0 items-start overflow-hidden bg-white pt-[6px] pl-[5px]">
      <div className="flex">
        <Logo />
        <span className="ml-[13px] pt-px font-[Roboto,sans-serif] text-[29px] leading-9 font-light text-[#3e4647]">windchill</span>
        <span className="text-[10px] leading-5 text-[#3e4647]">°</span>
      </div>
      <span className="mt-3 ml-[28px] text-sm text-[#444]">mjones</span>
      <div className="mt-[6px] ml-auto flex">
        <div className="flex h-[25px] border-2 border-[#a5a5a5]">
          <select aria-label="Search type" className="w-[190px] appearance-none pl-1 text-[15px] text-[#555]">
            <option>Part, Document, CAD D...</option>
          </select>
          <span className="flex w-5 items-center justify-center bg-linear-to-b from-[#fdd9a0] to-[#f9a53c]">
            <ChevronDown className="h-[14px] w-[14px] text-[#333]" strokeWidth={3.5} />
          </span>
        </div>
        <div className="ml-[11px] flex h-[25px] border-2 border-[#a5a5a5]">
          <input aria-label="Search" placeholder="Search . . ." className="w-[197px] pl-1 text-[15px] placeholder:text-[#8d8d8d]" />
          <button aria-label="Search" className="flex w-[21px] items-center justify-center border-l border-[#aaa] bg-[#dcdfe5]">
            <Magnifier className="h-[19px] w-[19px]" />
          </button>
          <button aria-label="Search options" className="flex w-[21px] items-center justify-center border-l border-[#aaa] bg-linear-to-b from-[#fdd9a0] to-[#f9a53c]">
            <ChevronDown className="h-[14px] w-[14px] text-[#333]" strokeWidth={3.5} />
          </button>
        </div>
        <button className="ml-5 h-[21px] w-[71px] rounded-l border border-r-0 border-[#bbb] bg-[#f3f3f3] pl-[3px] text-left text-[13px] leading-[17px] whitespace-nowrap text-[#333] shadow-sm">Quick Links</button>
      </div>
    </header>
  );
}

function Sidebar() {
  return (
    <aside className="flex w-[35px] shrink-0 flex-col items-start border-r-[3px] border-[#5cb83c] bg-[#3d4445] pt-[14px] pb-[20px] pl-1 font-['DejaVu_Sans',Verdana,sans-serif] text-[15px] leading-5 font-bold text-white">
      <button aria-label="Open navigator">
        <svg className="h-[19px] w-[19px]" viewBox="0 0 19 19">
          <path d="M.500.500h18v18H.500z" fill="#fff" stroke="#c87a28" />
          <path d="M1 1h6v17H1z" fill="#fbb04a" />
          <path d="M7.500 1v17" stroke="#8a4a12" strokeDasharray="1 2" />
          <path d="M11 5l4 4.500-4 4.500" fill="none" stroke="#8a4a12" strokeWidth="2" />
        </svg>
      </button>
      <svg className="mt-[11px] h-[18px] w-[18px] shrink-0" viewBox="0 0 18 18">
        <path d="M1 17l6-7" stroke="#999" strokeWidth="1.500" />
        <path d="M6 5q4-5 9-3 3 3 0 7-4 4-8 1z" fill="#dd8a35" stroke="#8f5015" />
        <circle cx="11.500" cy="5" r="2.500" fill="#f7c585" />
      </svg>
      <span className="mt-[15px] [writing-mode:vertical-rl]">
        <u>S</u>earch | Bro<u>w</u>se
      </span>
      <span className="mt-auto [writing-mode:vertical-rl]">Navigator</span>
    </aside>
  );
}

function Ribbon() {
  return (
    <div className="flex gap-[4px] border-t border-[#b5b5b5] bg-[#f0f0f0] pt-[4px] pl-1">
      <Group title="Editing" className="w-[219px]">
        <div className="grid grid-cols-[124px_1fr] justify-items-start pt-px pl-[6px]">
          <Item icon={<PlusIcon />} label="Insert Existing" />
          <Item icon={<MinusIcon />} label="Remove" disabled />
          <Item icon={<InsertNewIcon />} label="Insert New" caret />
          <Item icon={<PencilIcon />} label="Edit" caret />
        </div>
      </Group>
      <Group title="Check Out/In" className="w-[240px]">
        <div className="grid grid-cols-[109px_1fr] justify-items-start pt-px pl-[6px]">
          <Item icon={<CheckOutIcon />} label="Check Out" />
          <Item icon={<ReviseIcon />} label="Revise" />
          <Item icon={<CheckInIcon />} label="Check In" caret disabled />
          <Item icon={<MyCheckoutsIcon />} label="My Checkouts" />
        </div>
      </Group>
      <Group title="Clipboard" className="w-[120px]">
        <div className="flex gap-[18px] pl-[9px]">
          <BigItem icon={<PasteIcon />} label="Paste" caret />
          <BigItem icon={<CopyIcon />} label="Copy" />
        </div>
      </Group>
      <Group title="Viewing" className="w-[192px]">
        <div className="grid grid-cols-[90px_1fr] justify-items-start pt-px pl-[6px]">
          <Item icon={<EyeIcon />} label="Show" caret />
          <Item icon={<ViewsIcon />} label="Views" caret />
          <Item icon={<HideIcon />} label="Hide" />
          <Item icon={<DisplayIcon />} label="Display" caret />
        </div>
      </Group>
      <Group title="New/Add To" className="w-[128px]">
        <div className="flex gap-[10px] pl-2">
          <BigItem icon={<NewIcon />} label="New" caret />
          <BigItem icon={<AddToIcon />} label="Add to" caret />
        </div>
      </Group>
      <Group title="Filter" className="w-[406px]">
        <div className="flex gap-2 pl-[10px]">
          <button className="flex flex-col items-center gap-[11px] pt-1 text-sm leading-5 whitespace-nowrap text-[#3a3a3a]">
            <EditFilterIcon />
            Edit Filter
          </button>
          <div className="w-[326px] pt-px">
            <div className="grid grid-cols-[168px_1fr] justify-items-start pl-[2px]">
              <Item icon={<CurrentFilterIcon />} label="Current Filter" />
              <Item icon={<PathFilterIcon />} label="Path Filter" caret />
            </div>
            <div className="flex h-[37px] items-center rounded border border-[#c9c9c9] pl-[6px]">
              <Item icon={<SavedFilterIcon />} label="Saved Filters" caret />
              <input aria-label="Filter" placeholder="Enter name or number" className="ml-auto h-6 w-[167px] border-2 border-[#999] bg-white pl-1 text-sm placeholder:text-[#8d8d8d]" />
              <button aria-label="Search filters" className="mr-[3px] flex h-6 w-[21px] items-center justify-center border border-l-0 border-[#c0c6d6] bg-[#e6e8ee]">
                <Magnifier className="h-[18px] w-[18px]" />
              </button>
            </div>
          </div>
        </div>
      </Group>
      <Group title="Tools" className="w-[166px]">
        <div className="flex gap-3 pl-[9px]">
          <BigItem icon={<CompareIcon />} label="Compare" caret />
          <BigItem icon={<FolderIcon />} label="Open in" caret />
        </div>
      </Group>
      <Group title="Reports" className="w-[150px]">
        <div className="flex justify-between pr-[3px] pl-[9px]">
          <BigItem icon={<ReportsIcon />} label="Reports" caret />
          <div className="relative h-[56px] w-[67px] rounded-t border-x-2 border-t border-[#8a6420] bg-linear-to-b from-[#fdc04a] from-20% to-[#f99d28] to-30% pl-[6px]">
            <BigItem icon={<ExportIcon />} label="Export" caret />
            <ExportMenu />
          </div>
        </div>
      </Group>
    </div>
  );
}

function FindBar() {
  return (
    <div className="flex h-[35px] shrink-0 items-center border-t border-b border-[#b9b9b9] bg-[#f0f0f0] pl-1 text-sm text-[#444]">
      <input aria-label="Find in Structure" placeholder="Find in Structure" className="h-[25px] w-[196px] border-2 border-[#8f8f8f] bg-white pl-[3px] placeholder:text-[#8d8d8d]" />
      <div className="flex h-[25px] border-y border-r border-[#d3d3d3] [&>button+button]:border-l [&>button+button]:border-[#d3d3d3]">
        <button aria-label="Next" className="flex w-[29px] items-center justify-center">
          <ChevronDown className="h-[18px] w-[18px]" strokeWidth={3} />
        </button>
        <button aria-label="Previous" className="flex w-[30px] items-center justify-center">
          <ChevronUp className="h-[18px] w-[18px]" strokeWidth={3} />
        </button>
        <button className="w-8">All</button>
        <button className="flex items-center gap-[7px] px-[5px]">
          Advanced <Caret />
        </button>
      </div>
      <nav className="ml-5 flex items-center text-[#1b4f8a]">
        <a href="#">Latest</a>
        <span className="mx-3 h-[15px] w-px bg-[#777]" />
        <a href="#">Design</a>
        <span className="mx-3 h-[15px] w-px bg-[#777]" />
        <a href="#">Working</a>
      </nav>
    </div>
  );
}

export default function App() {
  const [tab, setTab] = useState('Structure');

  return (
    <div className="relative flex h-screen flex-col overflow-hidden bg-white font-['Liberation_Sans',Arial,sans-serif]">
      <Header />
      <div className="flex min-h-0 flex-1">
        <Sidebar />
        <div className="flex min-w-0 flex-1 flex-col bg-[#c8c8c6] pl-[11px]">
          <div className="flex h-[46px] shrink-0 items-center pt-[2px] pl-[4px] text-[15px] text-[#1b4f8a]">
            <HomeIcon />
            <nav className="ml-[17px] flex gap-1 whitespace-nowrap">
              <a href="#">Products</a>
              <span className="text-[13px] leading-6 text-[#444]">&gt;</span>
              <a href="#">Drill - 600 Series</a>
              <span className="text-[13px] leading-6 text-[#444]">&gt;</span>
              <a href="#">Engineering</a>
            </nav>
            <button className="ml-auto h-5 w-[116px] rounded-l border border-r-0 border-[#aaa] bg-[#f3f3f3] pl-[3px] text-left text-[13px] leading-4 whitespace-nowrap text-[#333] shadow-sm">Recently Accessed</button>
          </div>

          <main className="flex min-h-0 flex-1 flex-col bg-white shadow-[-2px_-1px_4px_#777]">
            <div className="flex h-12 shrink-0 items-center overflow-hidden pb-[3px] pl-[12px]">
              <button className="flex h-[22px] w-[65px] items-center gap-1 rounded border border-[#aaa] bg-[#f6f6f6] pb-px pl-[3px] text-sm text-[#444] shadow-sm">
                Actions
                <Caret />
              </button>
              <Gear className="ml-2 h-[21px] w-[21px]" />
              <h1 className="ml-[4px] pt-1 text-xl whitespace-nowrap text-[#555]">
                Part - <b className="text-[#444]">DRILL_600, drill_600, A.1 (Design)</b>
              </h1>
              <span className="ml-auto pt-[3px] text-[15px] text-[#666]">In Work</span>
              <a href="#" aria-label="Help" className="mt-[3px] -mr-[5px] ml-[9px] flex h-5 w-5 items-center justify-center rounded-full bg-[#3f74a8] text-sm font-bold text-white">?</a>
            </div>

            <div className="flex h-[32px] shrink-0 border-b-2 border-[#d3d3d3] pl-[9px]">
              <div role="tablist" className="flex gap-[3px] border-t border-x border-[#d3d3d3] bg-[#d3d3d3]">
                {mainTabs.map((t) => (
                  <Tab key={t} label={t} active={t === tab} onClick={() => setTab(t)} />
                ))}
                <button role="tab" className="flex items-center gap-3 bg-[#c8c8c6] px-[11px] text-[15px] font-bold whitespace-nowrap text-white">
                  New Tab 1
                  <svg className="h-[9px] w-2" viewBox="0 0 8 9">
                    <path d="M1 1l6 7M7 1L1 8" stroke="#888" strokeWidth="2.800" />
                    <path d="M1 1l6 7M7 1L1 8" stroke="#fff" strokeWidth="1" />
                  </svg>
                </button>
                <button aria-label="Add tab" className="flex w-[46px] items-center justify-center bg-[#c8c8c6]">
                  <svg className="h-5 w-5" viewBox="0 0 20 20">
                    <circle cx="10" cy="10" r="9" fill="#fbe3c0" stroke="#e08a2c" strokeWidth="1.500" />
                    <circle cx="10" cy="10" r="6.800" fill="#f7941d" />
                    <path d="M10 6v8M6 10h8" stroke="#fff" strokeWidth="2.400" />
                  </svg>
                </button>
              </div>
            </div>
            <div className="h-[3px] shrink-0" />

            <Ribbon />
            <FindBar />

            <div className="flex min-h-0 flex-1 gap-[6px] pt-[6px] pb-[3px] pl-[7px]">
              <StructureTree />
              <Viewer />
            </div>
          </main>
        </div>
      </div>
      <DownloadsBar />

      {/* pointer */}
      <svg className="pointer-events-none absolute top-[148px] left-[633px] h-6 w-4" viewBox="0 0 16 24">
        <path d="M1.500 1.500v18l4.500-4 3 7 3-1.300-3-6.700h6z" fill="#fff" stroke="#111" strokeWidth="1.400" />
      </svg>
    </div>
  );
}
